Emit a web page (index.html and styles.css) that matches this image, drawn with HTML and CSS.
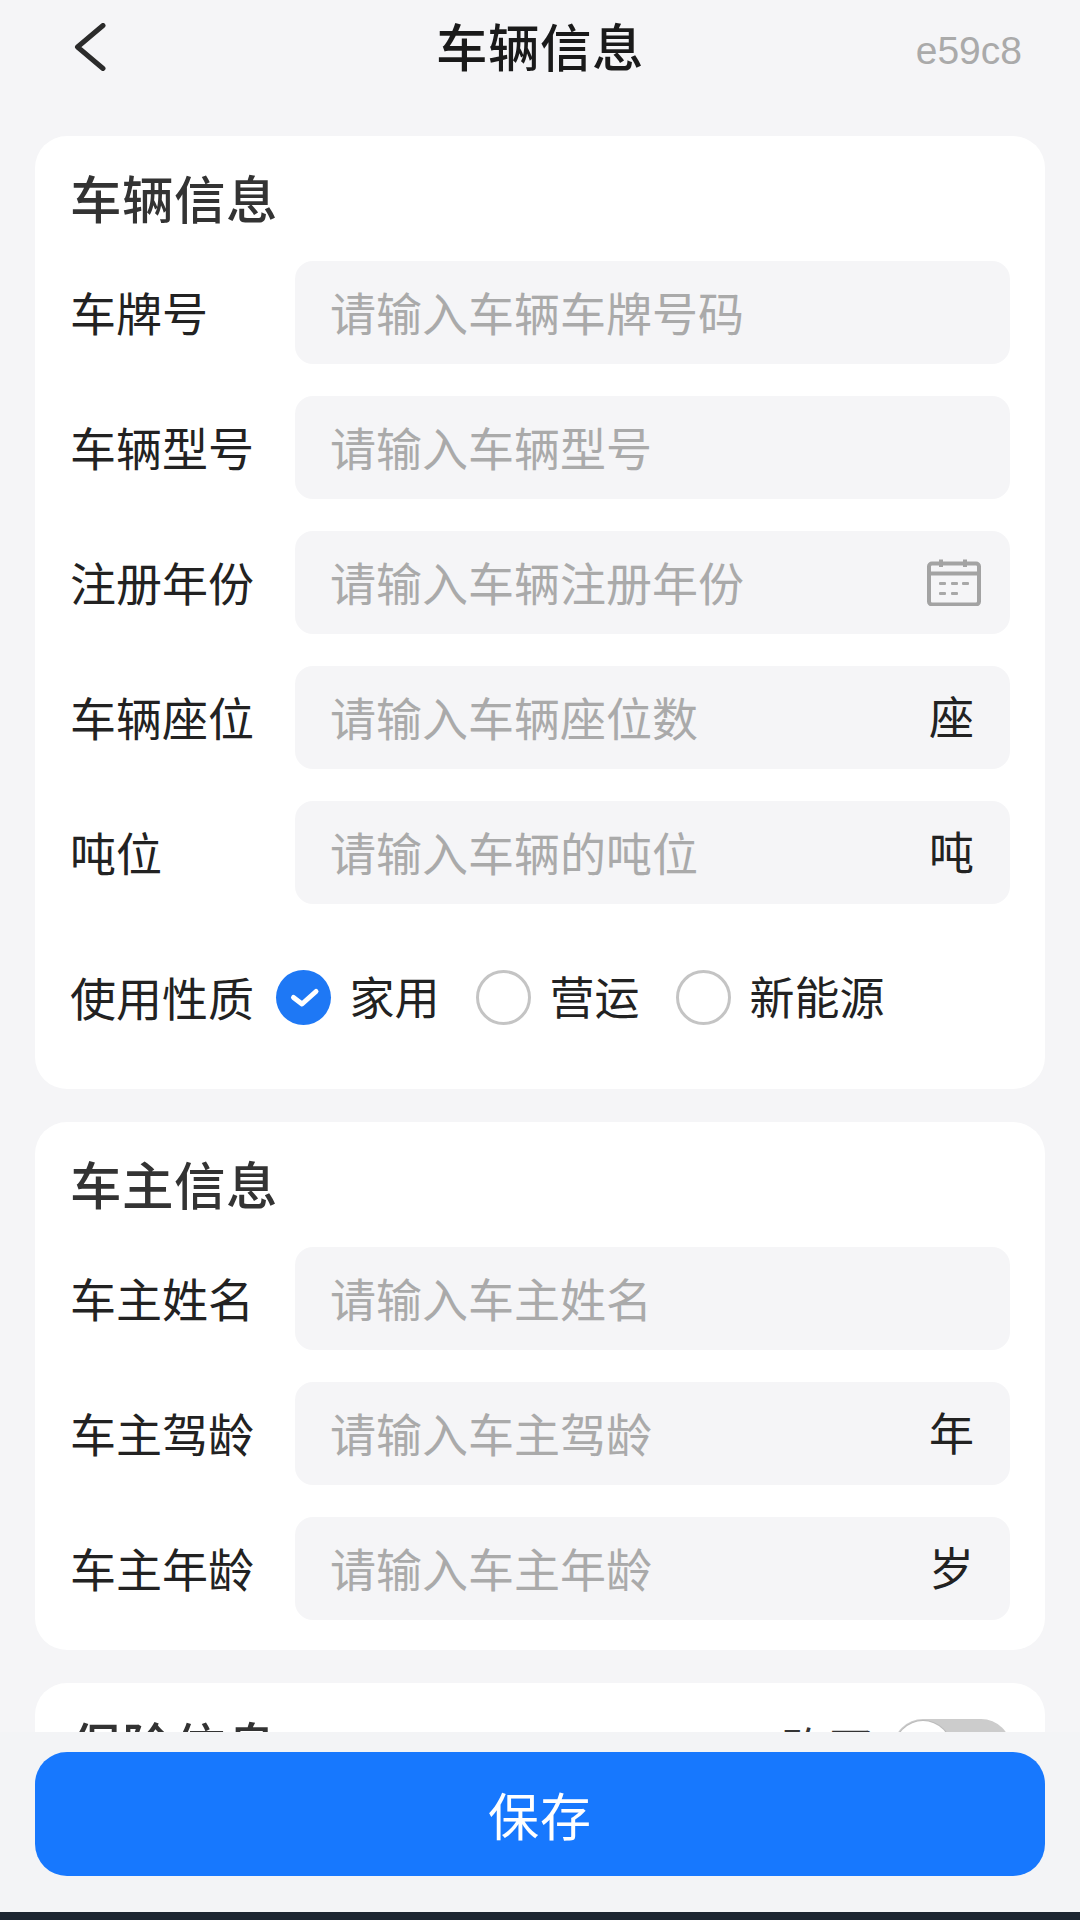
FILE: index.html
```html
<!DOCTYPE html>
<html lang="zh-CN">
<head>
<meta charset="utf-8">
<title>车辆信息</title>
<link rel="stylesheet" href="styles.css">
</head>
<body>
<div class="page">
  <header class="topbar">
    <svg class="back" viewBox="0 0 32 48" width="32" height="48"><path d="M29 2.500 3.500 24 29 45.500" fill="none" stroke="#2b2b2b" stroke-width="5" stroke-linecap="round" stroke-linejoin="round"/></svg>
    <h1 class="page-title">车辆信息</h1>
    <span class="code">e59c8</span>
  </header>
  <main class="scroll">
    <section class="card">
      <h2 class="card-title">车辆信息</h2>
      <div class="rows">
        <div class="row"><span class="label">车牌号</span><div class="field"><span class="ph">请输入车辆车牌号码</span></div></div>
        <div class="row"><span class="label">车辆型号</span><div class="field"><span class="ph">请输入车辆型号</span></div></div>
        <div class="row"><span class="label">注册年份</span><div class="field"><span class="ph">请输入车辆注册年份</span>
          <svg class="cal" viewBox="0 0 54 47" width="54" height="47"><g fill="none" stroke="#a3a3a3" stroke-width="4"><rect x="2" y="4.500" width="50" height="41" rx="3"/><path d="M2 14.500H52M14 0.500V8M38 0.500V8"/></g><g fill="#a8a8a8"><rect x="12" y="23" width="7" height="3" rx="1"/><rect x="24" y="23" width="7" height="3" rx="1"/><rect x="35" y="23" width="7" height="3" rx="1"/><rect x="12" y="33" width="7" height="3" rx="1"/><rect x="24" y="33" width="7" height="3" rx="1"/></g></svg>
        </div></div>
        <div class="row"><span class="label">车辆座位</span><div class="field"><span class="ph">请输入车辆座位数</span><span class="unit">座</span></div></div>
        <div class="row"><span class="label">吨位</span><div class="field"><span class="ph">请输入车辆的吨位</span><span class="unit">吨</span></div></div>
      </div>
      <div class="radio-row">
        <span class="radio-label">使用性质</span>
        <div class="radios">
          <div class="radio"><span class="dot on"><svg viewBox="0 0 55 55" width="55" height="55"><path d="M17.500 27.500 26 34 40 21.500" fill="none" stroke="#fff" stroke-width="5" stroke-linecap="round" stroke-linejoin="round"/></svg></span><span class="radio-text">家用</span></div>
          <div class="radio"><span class="dot"></span><span class="radio-text">营运</span></div>
          <div class="radio"><span class="dot"></span><span class="radio-text">新能源</span></div>
        </div>
      </div>
    </section>
    <section class="card">
      <h2 class="card-title">车主信息</h2>
      <div class="rows">
        <div class="row"><span class="label">车主姓名</span><div class="field"><span class="ph">请输入车主姓名</span></div></div>
        <div class="row"><span class="label">车主驾龄</span><div class="field"><span class="ph">请输入车主驾龄</span><span class="unit">年</span></div></div>
        <div class="row"><span class="label">车主年龄</span><div class="field"><span class="ph">请输入车主年龄</span><span class="unit">岁</span></div></div>
      </div>
    </section>
    <section class="card">
      <div class="card-head">
        <h2 class="card-title">保险信息</h2>
        <div class="buy"><span class="buy-text">购买</span><span class="toggle"><span class="knob"></span></span></div>
      </div>
    </section>
  </main>
  <footer class="footer"><button class="save" type="button">保存</button></footer>
  <div class="strip"></div>
</div>
</body>
</html>
```
FILE: styles.css
```css
* { box-sizing: border-box; margin: 0; padding: 0; }
html, body { width: 1080px; height: 1920px; overflow: hidden; }
body { font-family: "Noto Sans CJK SC", "Liberation Sans", sans-serif; background: #f5f5f7; color: #222; }
.page { width: 1080px; height: 1920px; display: flex; flex-direction: column; }

.topbar { flex: none; height: 94px; padding: 0 58px; display: grid; grid-template-columns: 1fr auto 1fr; align-items: center; }
.back { display: block; margin-left: 16px; }
.page-title { font-size: 51.500px; font-weight: 500; line-height: 66px; color: #1a1a1a; letter-spacing: 0.500px; margin-bottom: 4px; }
.code { justify-self: end; font-family: "Liberation Sans", sans-serif; font-size: 39px; color: #aaa; margin-top: 8px; }

.scroll { flex: 1; min-height: 0; overflow: hidden; padding: 42px 35px 0; display: flex; flex-direction: column; gap: 33px; }
.card { flex: none; background: #fff; border-radius: 32px; padding: 28px 35px 30px 35px; }
.card-title { font-size: 51.500px; font-weight: 500; line-height: 66px; color: #333; margin-bottom: 31px; letter-spacing: 0.500px; }
.rows { display: flex; flex-direction: column; gap: 32px; }
.row { display: flex; align-items: center; height: 103px; }
.label { flex: none; width: 225px; font-size: 46px; line-height: 60px; color: #222; margin-bottom: 3px; }
.field { flex: 1; height: 103px; background: #f5f5f7; border-radius: 18px; padding: 0 35px; display: flex; align-items: center; justify-content: space-between; }
.ph { font-size: 46px; line-height: 60px; color: #aaa; margin-bottom: 3px; }
.unit { font-size: 45px; line-height: 60px; color: #222; margin-bottom: 3px; margin-right: 1px; }
.cal { display: block; margin-right: -6px; }

.radio-row { display: flex; align-items: center; height: 60px; margin-top: 63px; margin-bottom: 32px; }
.radio-label { font-size: 46px; line-height: 60px; color: #222; margin-right: 22px; margin-bottom: 2px; }
.radios { display: flex; gap: 36.500px; }
.radio { display: flex; align-items: center; gap: 18.500px; font-size: 45px; line-height: 60px; color: #222; }
.radio-text { margin-bottom: 2px; }
.dot { width: 55px; height: 55px; border-radius: 50%; border: 3px solid #c4c4c4; background: #fff; display: block; }
.dot.on { background: #1e78f5; border: 0; }
.dot svg { display: block; }

.card-head { display: flex; align-items: flex-start; justify-content: space-between; }
.card-head .card-title { margin-bottom: 0; }
.buy { display: flex; align-items: flex-start; gap: 20px; font-size: 46px; line-height: 60px; color: #333; margin-top: 8px; margin-right: -1px; }
.buy-text { margin-top: -3px; }
.toggle { display: block; width: 118px; height: 60px; border-radius: 30px; background: #ccc; padding: 2px; }
.knob { display: block; width: 56px; height: 56px; border-radius: 50%; background: #fff; box-shadow: 0 0 0 1px #bbb; }

.footer { flex: none; height: 180px; padding: 20px 35px 0; background: #f3f4f6; position: relative; }
.save { display: block; width: 100%; height: 124px; border: 0; border-radius: 32px; background: #1778fe; color: #fff; font-family: inherit; font-size: 51px; letter-spacing: 1px; }
.strip { flex: none; height: 8px; background: #1c2530; }
```
